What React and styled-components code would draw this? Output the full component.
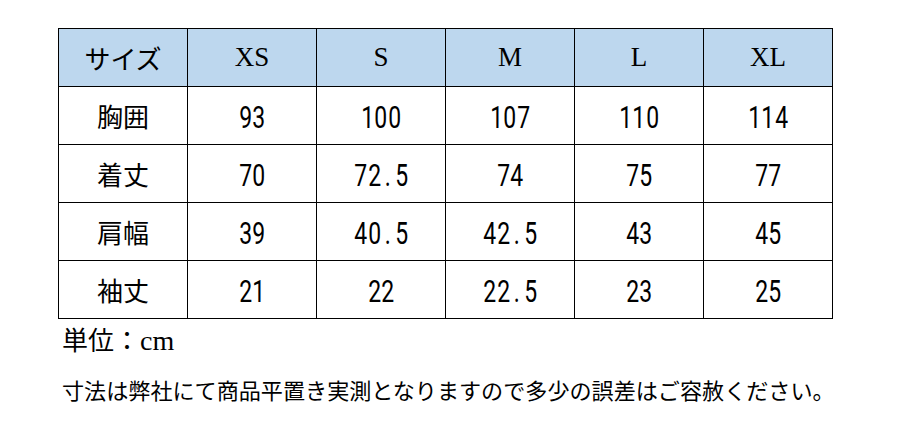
import React from 'react';
import styled, { createGlobalStyle } from 'styled-components';

const GlobalStyle = createGlobalStyle`
  html, body {
    margin: 0;
    padding: 0;
    background: #ffffff;
  }
  body {
    font-family: "Noto Sans CJK JP", "Noto Sans", sans-serif;
    color: #000000;
  }
`;

const Page = styled.div`
  width: 907px;
  height: 422px;
  box-sizing: border-box;
  padding: 28px 0 0 58px;
`;

const SizeTable = styled.div`
  display: grid;
  grid-template-columns: repeat(6, 128px);
  grid-auto-rows: 57px;
  gap: 1px;
  padding: 1px;
  width: max-content;
  background: #000000;
`;

const Cell = styled.div`
  display: flex;
  align-items: center;
  justify-content: center;
  background: ${props => (props.head ? '#bdd7ee' : '#ffffff')};
  font-family: ${props => (props.serif
    ? '"Liberation Serif", "Noto Sans CJK JP", serif'
    : '"Noto Sans CJK JP", sans-serif')};
  font-size: ${props => (props.serif ? '27px' : '26px')};
  line-height: 1;
  color: #000000;
`;

// narrow fixed-pitch digits, one cell per character
const Num = styled.span`
  display: inline-flex;
  margin-top: 3px;
`;

const Glyph = styled.span`
  display: inline-flex;
  justify-content: center;
  width: 13.5px;
  font-family: Roboto, "Liberation Sans", sans-serif;
  font-size: 31px;
  line-height: 1;
  transform: scaleX(0.74);
`;

const Unit = styled.div`
  margin: 5px 0 0 4px;
  font-size: 26px;
  line-height: 30px;
`;

const UnitLatin = styled.span`
  font-family: "Liberation Serif", serif;
  font-size: 28px;
`;

const Note = styled.div`
  margin: 18px 0 0 4px;
  font-size: 22.1px;
  line-height: 30px;
  white-space: nowrap;
`;

const sizes = ['XS', 'S', 'M', 'L', 'XL'];

const rows = [
  { label: '胸囲', values: ['93', '100', '107', '110', '114'] },
  { label: '着丈', values: ['70', '72.5', '74', '75', '77'] },
  { label: '肩幅', values: ['39', '40.5', '42.5', '43', '45'] },
  { label: '袖丈', values: ['21', '22', '22.5', '23', '25'] },
];

const App = () => (
  <>
    <GlobalStyle />
    <Page>
      <SizeTable>
        <Cell head>サイズ</Cell>
        {sizes.map(size => (
          <Cell head serif key={size}>{size}</Cell>
        ))}
        {rows.map(row => (
          <React.Fragment key={row.label}>
            <Cell>{row.label}</Cell>
            {row.values.map((value, i) => (
              <Cell key={i}>
                <Num>
                  {value.split('').map((ch, j) => (
                    <Glyph key={j}>{ch}</Glyph>
                  ))}
                </Num>
              </Cell>
            ))}
          </React.Fragment>
        ))}
      </SizeTable>
      <Unit>
        単位：<UnitLatin>cm</UnitLatin>
      </Unit>
      <Note>寸法は弊社にて商品平置き実測となりますので多少の誤差はご容赦ください。</Note>
    </Page>
  </>
);

export default App;
